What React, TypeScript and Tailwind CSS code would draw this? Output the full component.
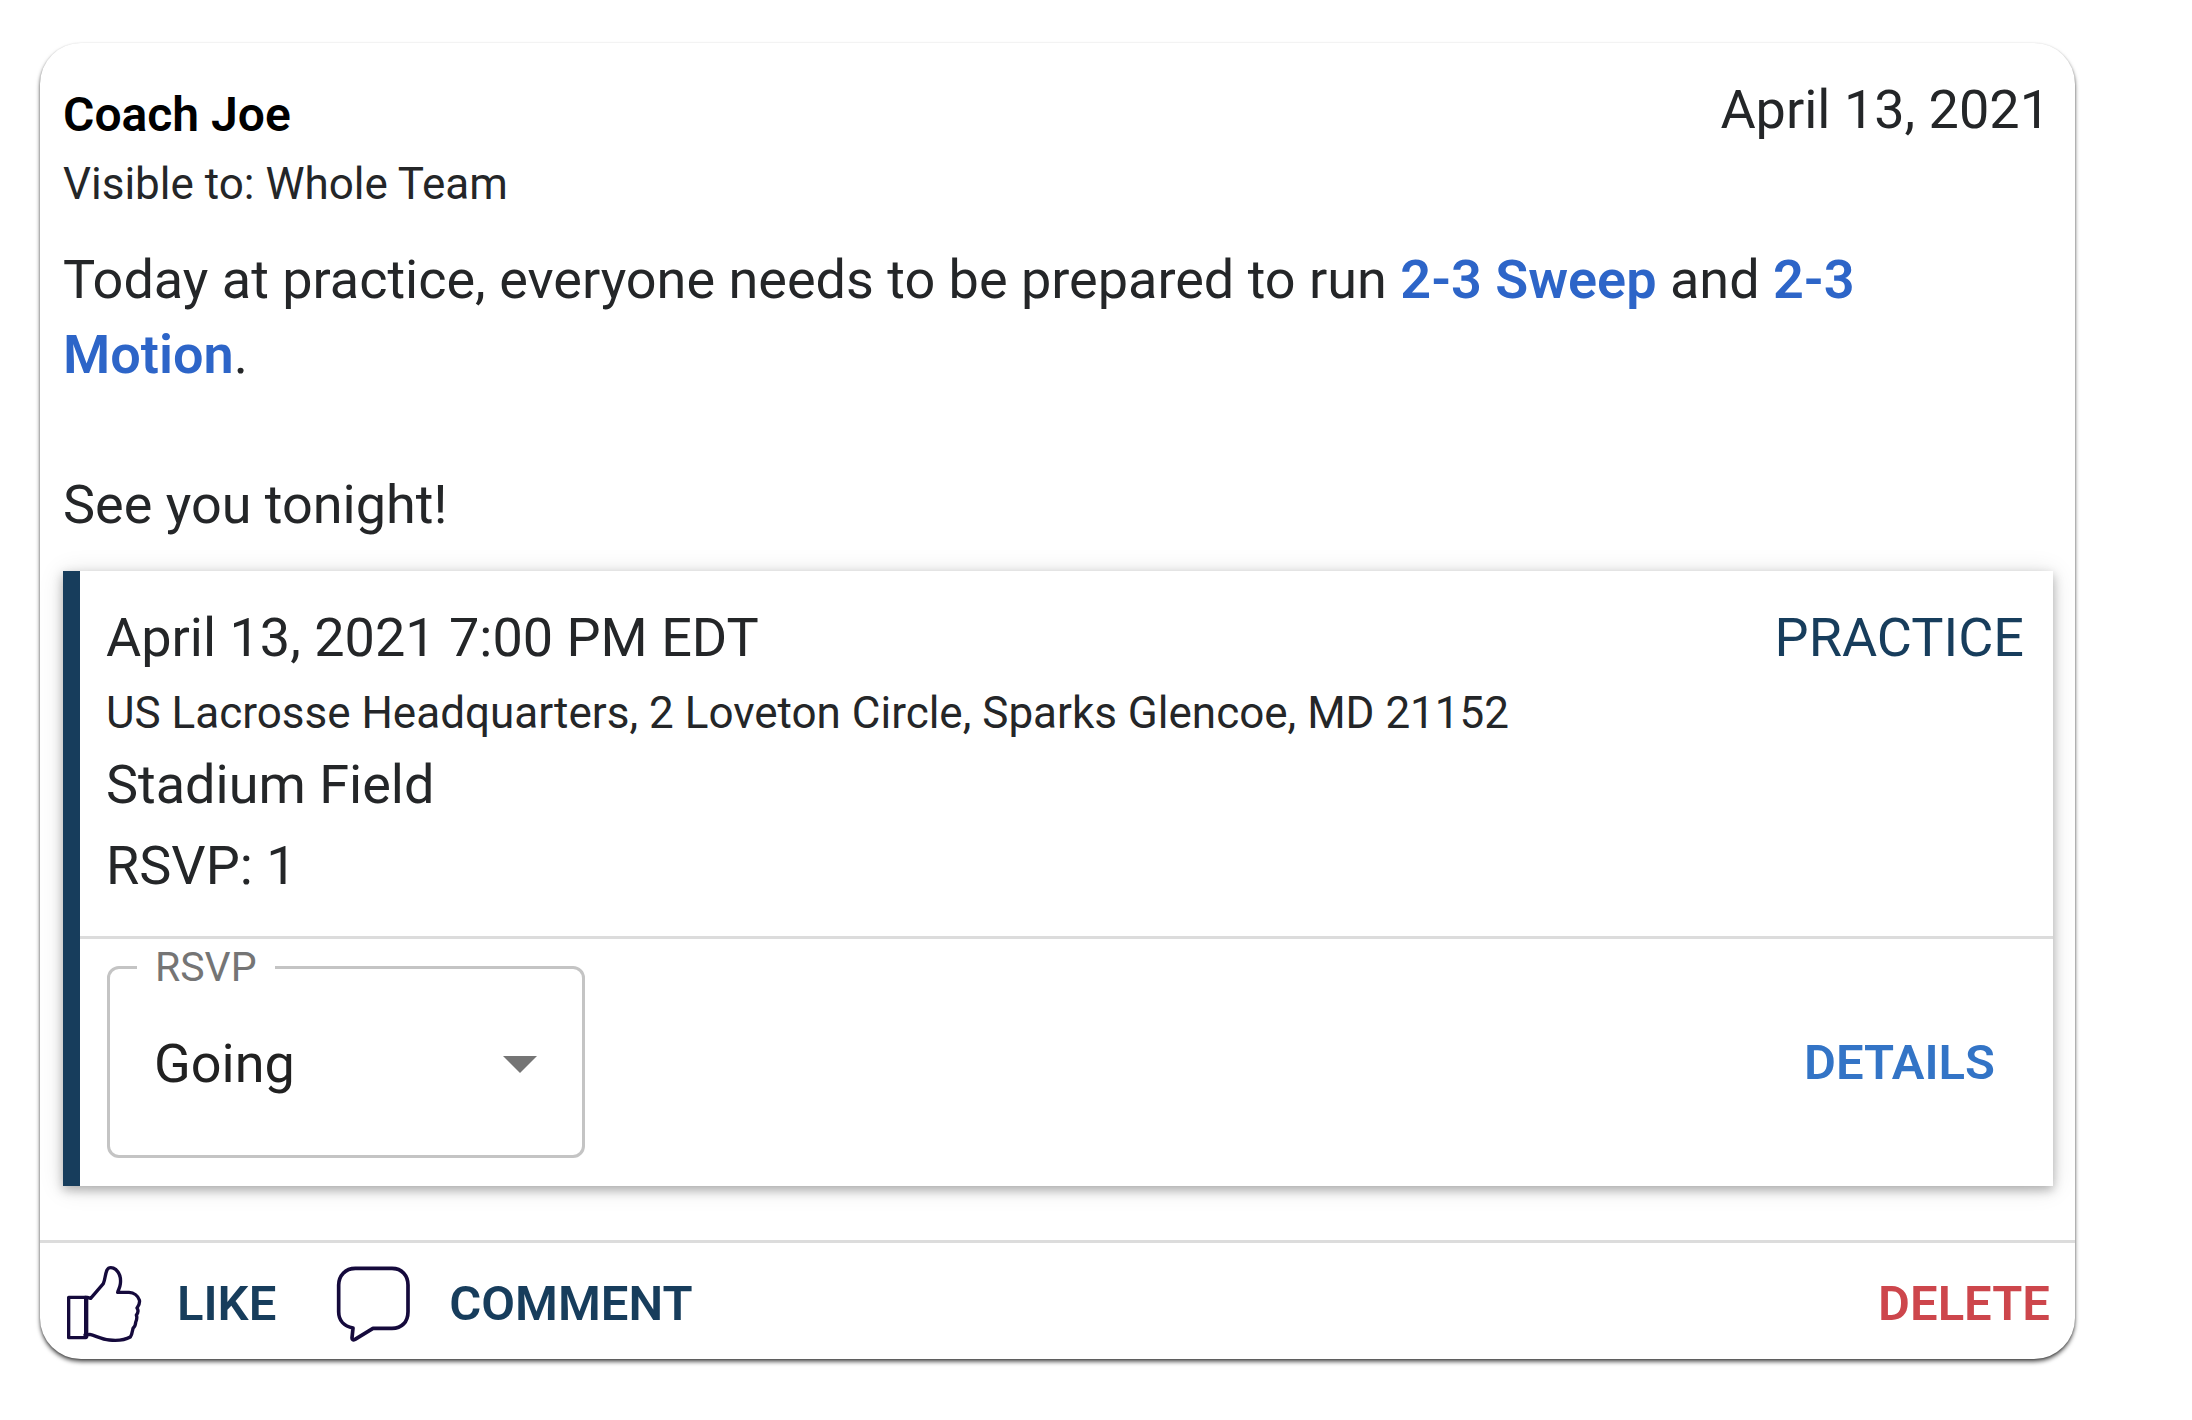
import { useState } from "react";

type Play = { id: string; name: string };

const plays: Record<string, Play> = {
  sweep: { id: "sweep", name: "2-3 Sweep" },
  motion: { id: "motion", name: "2-3 Motion" },
};

const event = {
  date: "April 13, 2021 7:00 PM EDT",
  address: "US Lacrosse Headquarters, 2 Loveton Circle, Sparks Glencoe, MD 21152",
  place: "Stadium Field",
  rsvpCount: 1,
  type: "PRACTICE",
};

const LikeIcon = () => (
  <svg
    viewBox="48 72 228 234"
    className="h-[78px] w-[76px] shrink-0"
    fill="none"
    stroke="#150a3c"
    strokeWidth="10"
    strokeLinejoin="round"
    strokeLinecap="round"
    aria-hidden="true"
  >
    <path d="M56 169H107V290H56Z" />
    <path d="M110 169V288" />
    <path d="M105 169H112L122 172L160 128C166 114 165 100 171 87C176 77 188 78 198 86C210 97 213 114 211 129C210 139 205 147 203 154H237C252 155 264 165 268 177C271 187 266 193 261 201C265 207 265 215 259 222C262 229 260 237 257 244C257 251 255 257 249 262C247 272 246 281 241 288C225 297 198 299 178 297C154 295 137 284 119 280L105 282" />
  </svg>
);

const CommentIcon = () => (
  <svg
    viewBox="78 72 222 234"
    className="h-[78px] w-[74px] shrink-0"
    fill="none"
    stroke="#150a3c"
    strokeWidth="11"
    strokeLinejoin="round"
    aria-hidden="true"
  >
    <path d="M136 82H246C276 82 294 104 294 132V212C294 243 275 262 246 262H189L135 295C129 298 126 296 126 291L129 261C103 256 86 239 86 212V132C86 104 106 82 136 82Z" />
  </svg>
);

const PlayLink = ({ play }: { play: Play }) => (
  <a href={`#${play.id}`} className="font-semibold text-[#2d65c8]">
    {play.name}
  </a>
);

const RsvpSelect = () => {
  const [status, setStatus] = useState("Going");

  return (
    <fieldset className="relative mt-2 mb-7 w-[478px] rounded-[12px] border-[3px] border-[#c4c4c4] pl-[27px]">
      <legend className="px-[18px] text-[41px] leading-[40px] text-[#757575]">
        <label htmlFor="rsvp">RSVP</label>
      </legend>
      <select
        id="rsvp"
        value={status}
        onChange={(e) => setStatus(e.target.value)}
        className="mb-4 h-[152px] w-full appearance-none bg-transparent pl-[17px] text-[54px] text-[#212121] outline-none"
      >
        <option>Going</option>
        <option>Maybe</option>
        <option>Not Going</option>
      </select>
      <svg
        viewBox="0 0 34 17"
        className="pointer-events-none absolute top-[69px] right-[45px] h-[17px] w-[34px]"
        fill="#757575"
        aria-hidden="true"
      >
        <path d="M0 0H34L17 17Z" />
      </svg>
    </fieldset>
  );
};

const EventCard = () => (
  <section className="mt-[29px] mr-[22px] ml-[23px] border-l-[17px] border-[#173d5c] bg-white shadow-[0_4px_10px_rgba(0,0,0,0.28),0_2px_24px_rgba(0,0,0,0.12)]">
    <div className="flex items-start justify-between border-b-[3px] border-[#dcdcdc] pt-7 pr-[29px] pb-[31px] pl-[26px]">
      <div>
        <h2 className="text-[54px] leading-[78px]">{event.date}</h2>
        <p className="text-[44px] leading-[72px]">{event.address}</p>
        <p className="text-[54px] leading-[72px]">{event.place}</p>
        <p className="mt-1.5 text-[54px] leading-[78px]">RSVP: {event.rsvpCount}</p>
      </div>
      <span className="text-[54px] leading-[78px] text-[#173d5c]">{event.type}</span>
    </div>
    <div className="flex items-center justify-between pr-[58px] pl-[27px]">
      <RsvpSelect />
      <button type="button" className="text-[49px] leading-[68px] font-semibold text-[#3374c6]">
        DETAILS
      </button>
    </div>
  </section>
);

const App = () => {
  return (
    <main className="bg-white pt-[43px] pr-[117px] pb-[62px] pl-10 font-['Roboto','Liberation_Sans',sans-serif] text-[#242628]">
      <article className="rounded-[41px] bg-white shadow-[0_3px_4px_rgba(0,0,0,0.6),0_1px_2px_rgba(0,0,0,0.3)]">
        <header className="flex items-start justify-between pt-[38px] pr-[25px] pl-[23px]">
          <div>
            <h1 className="text-[48px] leading-[68px] font-semibold text-black">Coach Joe</h1>
            <p className="text-[44px] leading-[70px]">Visible to: Whole Team</p>
          </div>
          <time dateTime="2021-04-13" className="text-[54px] leading-[58px]">
            April 13, 2021
          </time>
        </header>

        <div className="mt-[23px] pr-[60px] pl-[23px] text-[54px] leading-[75px]">
          <p>
            Today at practice, everyone needs to be prepared to run <PlayLink play={plays.sweep} /> and{" "}
            <PlayLink play={plays.motion} />.
          </p>
          <p className="mt-[75px]">See you tonight!</p>
        </div>

        <EventCard />

        <footer className="mt-[54px] flex items-center border-t-[3px] border-[#dcdcdc] pt-[22px] pr-[25px] pb-4 pl-[26px] text-[49px] font-semibold text-[#173d5c]">
          <button type="button" className="flex items-center gap-[35px]">
            <LikeIcon />
            LIKE
          </button>
          <button type="button" className="ml-[60px] flex items-center gap-[39px]">
            <CommentIcon />
            COMMENT
          </button>
          <button type="button" className="ml-auto text-[#cd464c]">
            DELETE
          </button>
        </footer>
      </article>
    </main>
  );
};

export default App;
